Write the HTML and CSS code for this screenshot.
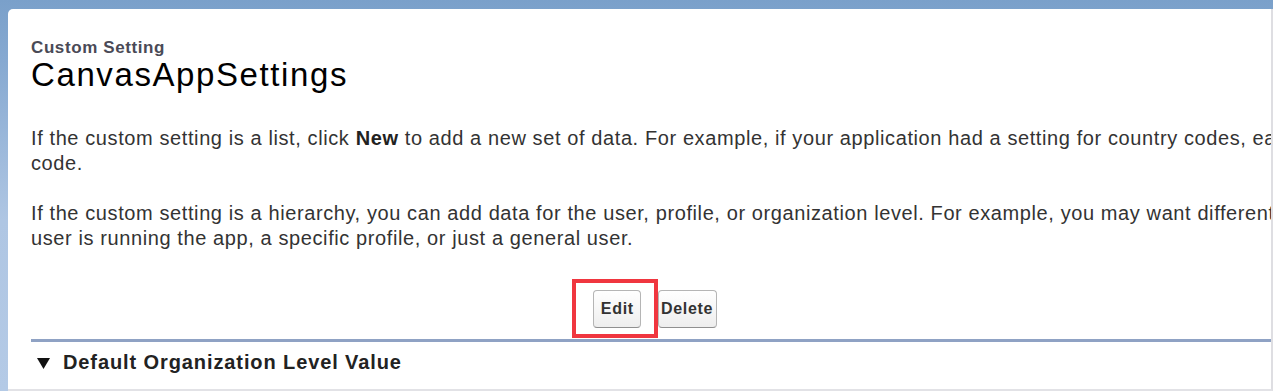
FILE: index.html
```html
<!DOCTYPE html>
<html>
<head>
  <title>CanvasAppSettings</title>
  <link rel="stylesheet" href="styles.css">
</head>
<body>

<div class="page">
  <div class="pageHeader">
    <div class="pageType">Custom Setting</div>
    <h1 class="pageTitle">CanvasAppSettings</h1>
  </div>

  <div class="intro">
    <p>If the custom setting is a list, click <b>New</b> to add a new set of data. For example, if your application had a setting for country codes, each set might include the country's name and dialing<br>code.</p>
    <p>If the custom setting is a hierarchy, you can add data for the user, profile, or organization level. For example, you may want different values to display depending on whether a specific<br>user is running the app, a specific profile, or just a general user.</p>
  </div>

  <div class="buttonRow">
    <span class="highlight">
      <button type="button" class="btn btnEdit">Edit</button>
    </span>
    <button type="button" class="btn">Delete</button>
  </div>

  <div class="section">
    <h3 class="sectionTitle">
      <svg class="twisty" width="13" height="11" viewBox="0 0 13 11"><polygon points="0,0 13,0 6.5,11" fill="#111"/></svg>Default Organization Level Value
    </h3>
  </div>
</div>

</body>
</html>
```

FILE: styles.css
```css
html, body {
  margin: 0;
  height: 100%;
  overflow: hidden;
}
body {
  background: linear-gradient(#7aa0ca 0px, #86a9d1 60px, #afc6e3 220px, #b4cae6 100%);
  font-family: "Liberation Sans", Arial, sans-serif;
}
.page {
  box-sizing: border-box;
  margin: 9px 0 0 8px;
  height: 382px;
  background: #fff;
  border-top-left-radius: 5px;
  border-right: 2px solid #dedee2;
  border-bottom: 2px solid #e2e2e6;
  padding: 30px 0 0 23px;
  overflow: hidden;
}
.pageType {
  font-size: 17px;
  font-weight: bold;
  letter-spacing: 0.6px;
  color: #4a4a56;
  line-height: 18px;
}
.pageTitle {
  margin: 0;
  font-size: 33px;
  font-weight: normal;
  letter-spacing: 1.6px;
  color: #000;
  line-height: 36px;
}
.intro {
  margin-top: 33px;
  width: 1300px;
  font-size: 20px;
  letter-spacing: 0.6px;
  line-height: 25px;
  color: #333;
  white-space: nowrap;
}
.intro p {
  margin: 0 0 25px;
}
.intro p:last-child {
  margin-bottom: 0;
}
.intro b {
  color: #222;
}
.buttonRow {
  width: 1248px;
  display: flex;
  justify-content: center;
  align-items: center;
  margin-top: 39px;
  gap: 17px;
}
.highlight {
  position: relative;
  display: flex;
}
/* red annotation box round Edit */
.highlight::after {
  content: "";
  position: absolute;
  left: -21px;
  right: -17px;
  top: -11px;
  bottom: -10px;
  border: 4px solid #f0363f;
}
.btn {
  font-family: "Liberation Sans", Arial, sans-serif;
  font-size: 16px;
  font-weight: bold;
  letter-spacing: 0.7px;
  color: #333;
  padding: 8px 3px 8px 2px;
  border: 1px solid #b5b5b5;
  border-bottom-color: #909090;
  border-radius: 4px;
  background: linear-gradient(#ffffff, #eeeeee);
  line-height: 20px;
}
.btnEdit {
  padding: 8px 6px 8px 7px;
}
.section {
  width: 1300px;
  margin-top: 11px;
  border-top: 3px solid #8fa2c4;
}
.sectionTitle {
  margin: 8px 0 0;
  font-size: 20px;
  letter-spacing: 0.9px;
  color: #222;
  line-height: 24px;
}
.twisty {
  margin: 0 13px 0 6px;
  vertical-align: 0;
}
```
